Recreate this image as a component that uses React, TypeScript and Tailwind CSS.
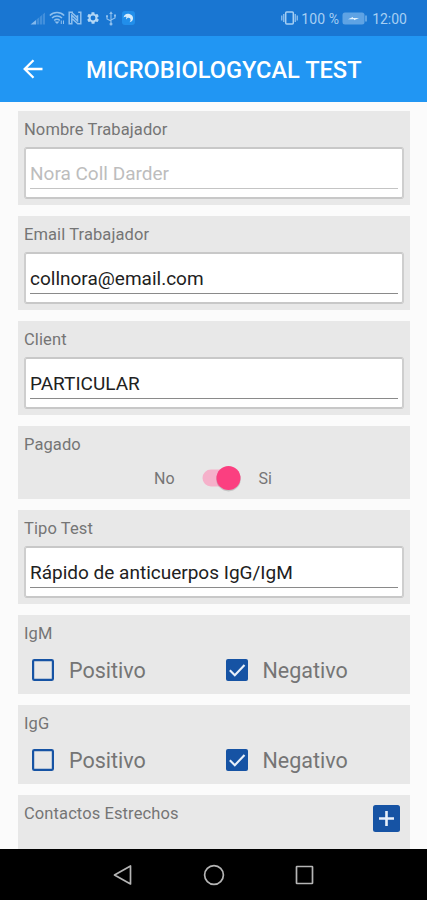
import { useState } from 'react';
import type { ReactNode } from 'react';

function StatusBar() {
  return (
    <div className="flex h-9 shrink-0 items-center justify-between bg-[#1976d2] pr-[20px] pl-[30px] text-[#8fc0ee]">
      <div className="flex items-center">
        {/* Signal strength */}
        <svg width="16" height="14" viewBox="0 0 16 14" fill="currentColor">
          <path d="M0.500 13.500L6 9v4.500z" opacity="0.9" />
          <path d="M6.500 13.500V8.500L9 6.500v7zM9.700 13.500V6L12 4v9.500zM12.700 13.500V3.500L15 1.500v12z" opacity="0.35" />
        </svg>
        {/* Wifi */}
        <svg className="ml-[3px]" width="16" height="14" viewBox="0 0 16 14" fill="none" stroke="currentColor" strokeWidth="1.500">
          <path d="M0.800 4.500a10.200 10.200 0 0 1 14.400 0M3 7a7.100 7.100 0 0 1 10 0M5.200 9.500a4 4 0 0 1 5.600 0" />
          <path d="M5.500 10.500h5L8 13z" fill="currentColor" stroke="none" />
          <path d="M12.300 9.500v3.500M14.500 9.500v3.500" strokeWidth="1" />
        </svg>
        {/* NFC */}
        <svg className="ml-[3px]" width="14" height="14" viewBox="0 0 14 14" fill="none" stroke="currentColor">
          <path d="M5 1.200H1.200v11.600h2.600V4.300l5.700 5.400V4.300M9 12.800h3.800V1.200h-2.600M4 1.700l5.500 5M4.500 8l5.500 5" strokeWidth="1.500" />
        </svg>
        <svg className="ml-[4px]" width="14" height="14" viewBox="0 0 24 24" fill="#b3d7f5">
          <path d="M19.400 13c.1-.7.1-1.300 0-2l2.100-1.700c.2-.1.300-.4.100-.6l-2-3.500c-.1-.2-.4-.3-.6-.2l-2.500 1c-.5-.4-1.100-.7-1.700-1l-.4-2.600c0-.2-.2-.4-.5-.4h-4c-.2 0-.4.2-.5.4L9.200 5c-.6.3-1.200.6-1.700 1L5 5c-.2-.1-.5 0-.6.2l-2 3.500c-.1.200-.1.500.1.600L4.600 11c-.1.700-.1 1.300 0 2l-2.100 1.700c-.2.1-.3.400-.1.600l2 3.500c.1.200.4.300.6.200l2.500-1c.5.400 1.100.7 1.700 1l.4 2.600c0 .2.200.4.500.4h4c.2 0 .4-.2.500-.4l.4-2.600c.6-.3 1.200-.6 1.700-1l2.500 1c.2.1.5 0 .6-.2l2-3.500c.1-.2.1-.5-.1-.6zM12 16.200a4.200 4.200 0 1 1 0-8.400 4.200 4.200 0 0 1 0 8.400z" />
        </svg>
        {/* USB */}
        <svg className="ml-[5px]" width="12" height="15" viewBox="0 0 12 15" fill="none" stroke="currentColor" strokeWidth="1.100">
          <path d="M6 2v10M6 10L2 8V5.500M6 9l4-2V4.500" />
          <path d="M6 0.300L4.200 3h3.600zM1 4.200h2v2H1zM9 3.500h2v2H9z" fill="currentColor" stroke="none" />
          <circle cx="6" cy="13" r="1.500" fill="currentColor" stroke="none" />
        </svg>
        <svg className="ml-[5px]" width="13" height="14" viewBox="0 0 13 14">
          <rect width="13" height="14" rx="3" fill="#218eea" />
          <path d="M1.500 6.500C2 4 4 2.500 6.500 2.800c3 .4 5 2.700 4.500 5.200-.4 1.800-1.700 2.900-3.500 3.200 1.200-1.200 1.500-2.900.5-4C7 6.200 5 6.500 4.200 8.500c-.3-1-.2-1.800.3-2.500-1.200-.3-2.200-.1-3 .5z" fill="#d5ebfb" />
        </svg>
      </div>
      <div className="flex items-center text-[14px] leading-none text-[#a6cff3]">
        {/* Vibrate */}
        <svg width="17" height="14" viewBox="0 0 17 14" fill="none" stroke="currentColor" strokeWidth="1.500">
          <rect x="4.700" y="1" width="7.600" height="12" rx="1" />
          <path d="M2.800 3v8M14.200 3v8M0.800 4.500v5M16.200 4.500v5" strokeWidth="1.100" />
        </svg>
        <span className="ml-[3px] pt-[2px] tracking-[0.1px]">100 %</span>
        <svg className="ml-[3px]" width="26" height="13" viewBox="0 0 26 13">
          <rect x="0.500" y="0.500" width="22" height="12" rx="2.500" fill="#5fa3e4" />
          <path d="M23 3.500h2v6h-2z" fill="#5fa3e4" />
          <path d="M6 7.300l5-2.300v1h6l-5 2.300v-1z" fill="#e3f2fd" />
        </svg>
        <span className="ml-[4px] pt-[2px]">12:00</span>
      </div>
    </div>
  );
}

function Section({ label, className, children }: { label: string; className: string; children?: ReactNode }) {
  return (
    <section className={`shrink-0 bg-[#e8e8e8] px-[6px] pt-[8px] ${className}`}>
      <h2 className="h-[28px] pt-[1px] text-[16.5px] leading-[20px] tracking-[0.1px] text-[#757575]">{label}</h2>
      {children}
    </section>
  );
}

function TextField({ value, disabled = false }: { value: string; disabled?: boolean }) {
  return (
    <div className="h-[52px] rounded-[3px] border-2 border-t-[#c8c8c8] border-r-[#cecece] border-b-[#c8c8c8] border-l-[#cecece] bg-white px-[4px] pt-[12px]">
      <div
        className={`h-[28px] border-b pt-[1px] text-[19px] leading-[24px] whitespace-nowrap ${
          disabled ? 'border-[#c4c4c4] text-[#bdbdbd]' : 'border-[#8a8a8a] text-[#212121]'
        }`}
      >
        {value}
      </div>
    </div>
  );
}

function CheckOption({ label, checked, onToggle }: { label: string; checked: boolean; onToggle: () => void }) {
  return (
    <button role="checkbox" aria-checked={checked} onClick={onToggle} className="flex w-[193.5px] shrink-0 items-center text-left">
      <svg width="22" height="22" viewBox="0 0 22 22" fill="none">
        {checked ? (
          <>
            <rect width="22" height="22" rx="2" fill="#1653a4" />
            <path d="M3.800 11.200l5 5L18.500 6" stroke="#e8f0fa" strokeWidth="2.100" />
          </>
        ) : (
          <rect x="1.100" y="1.100" width="19.800" height="19.800" rx="1.200" stroke="#1653a4" strokeWidth="2.200" />
        )}
      </svg>
      <span className="ml-[15px] pt-[2px] text-[21.5px] leading-[24px] text-[#757575]">{label}</span>
    </button>
  );
}

function ResultSection({ label, className }: { label: string; className: string }) {
  const [result, setResult] = useState('Negativo');

  return (
    <Section label={label} className={className}>
      <div className="mt-[6px] flex pl-[8px]">
        {['Positivo', 'Negativo'].map((option) => (
          <CheckOption key={option} label={option} checked={result === option} onToggle={() => setResult(option)} />
        ))}
      </div>
    </Section>
  );
}

export default function App() {
  const [paid, setPaid] = useState(true);

  return (
    <div className="flex h-[900px] w-[427px] flex-col overflow-hidden bg-[#fbfbfb] font-[Roboto,sans-serif]">
      <StatusBar />

      <header className="flex h-[66px] shrink-0 items-center bg-[#2196f3] pl-[23px] text-white">
        <svg width="20" height="20" viewBox="0 0 20 20" fill="none" stroke="currentColor" strokeWidth="2.300">
          <path d="M19.500 10H2.200M10.500 1.200L1.700 10l8.800 8.800" />
        </svg>
        <h1 className="mt-[1px] ml-[43px] text-[23.6px] leading-[30px] font-medium whitespace-nowrap">MICROBIOLOGYCAL TEST</h1>
      </header>

      <main className="flex min-h-0 flex-1 flex-col gap-[11px] overflow-hidden pt-[9px] pr-[17px] pl-[18px]">
        <Section label="Nombre Trabajador" className="h-[94px]">
          <TextField value="Nora Coll Darder" disabled />
        </Section>
        <Section label="Email Trabajador" className="h-[94px]">
          <TextField value="collnora@email.com" />
        </Section>
        <Section label="Client" className="h-[94px]">
          <TextField value="PARTICULAR" />
        </Section>

        <Section label="Pagado" className="h-[73px]">
          <div className="mt-[4px] flex h-[24px] items-center pl-[130px] text-[16px] text-[#757575]">
            <span className="w-[48px] pt-[1px]">No</span>
            <button role="switch" aria-checked={paid} onClick={() => setPaid(!paid)} className="flex h-[24px] w-[38px]">
              <svg className="overflow-visible" width="38" height="24" viewBox="0 0 38 24">
                <rect x="0.500" y="3.500" width="34" height="17" rx="8.500" fill={paid ? '#f5b1ca' : '#b5b5b5'} />
                <circle cx={paid ? 26.5 : 12} cy="13.200" r="12.200" fill="#000" opacity="0.15" />
                <circle cx={paid ? 26.5 : 12} cy="12" r="12" fill={paid ? '#fb3f80' : '#f5f5f5'} />
              </svg>
            </button>
            <span className="ml-[18.5px] pt-[1px]">Si</span>
          </div>
        </Section>

        <Section label="Tipo Test" className="h-[94px]">
          <TextField value="Rápido de anticuerpos IgG/IgM" />
        </Section>

        <ResultSection label="IgM" className="h-[79px]" />
        <ResultSection label="IgG" className="h-[79px]" />

        <section className="flex h-[90px] shrink-0 items-start justify-between bg-[#e8e8e8] pt-[8px] pr-[10px] pl-[6px]">
          <h2 className="pt-[1px] text-[16.5px] leading-[20px] tracking-[0.1px] text-[#757575]">Contactos Estrechos</h2>
          <button aria-label="Add" className="mt-[2px]">
            <svg width="27" height="27" viewBox="0 0 27 27">
              <rect width="27" height="27" rx="2.500" fill="#1653a4" />
              <path d="M13.500 6v15M6 13.500h15" stroke="#e8f0fa" strokeWidth="2.600" />
            </svg>
          </button>
        </section>
      </main>

      <nav className="flex h-[51px] shrink-0 items-center bg-black pl-[113px] text-[#b5b5b5]">
        <svg width="20" height="22" viewBox="0 0 20 22" fill="none" stroke="currentColor" strokeWidth="1.700" strokeLinejoin="round">
          <path d="M17.500 2v18L1.500 11z" />
        </svg>
        <svg className="ml-[70px]" width="22" height="22" viewBox="0 0 22 22" fill="none" stroke="currentColor" strokeWidth="1.700">
          <circle cx="11" cy="11" r="9.400" />
        </svg>
        <svg className="ml-[69px]" width="22" height="22" viewBox="0 0 22 22" fill="none" stroke="currentColor" strokeWidth="1.700">
          <rect x="2.500" y="2.500" width="16" height="17" rx="0.500" />
        </svg>
      </nav>
    </div>
  );
}
